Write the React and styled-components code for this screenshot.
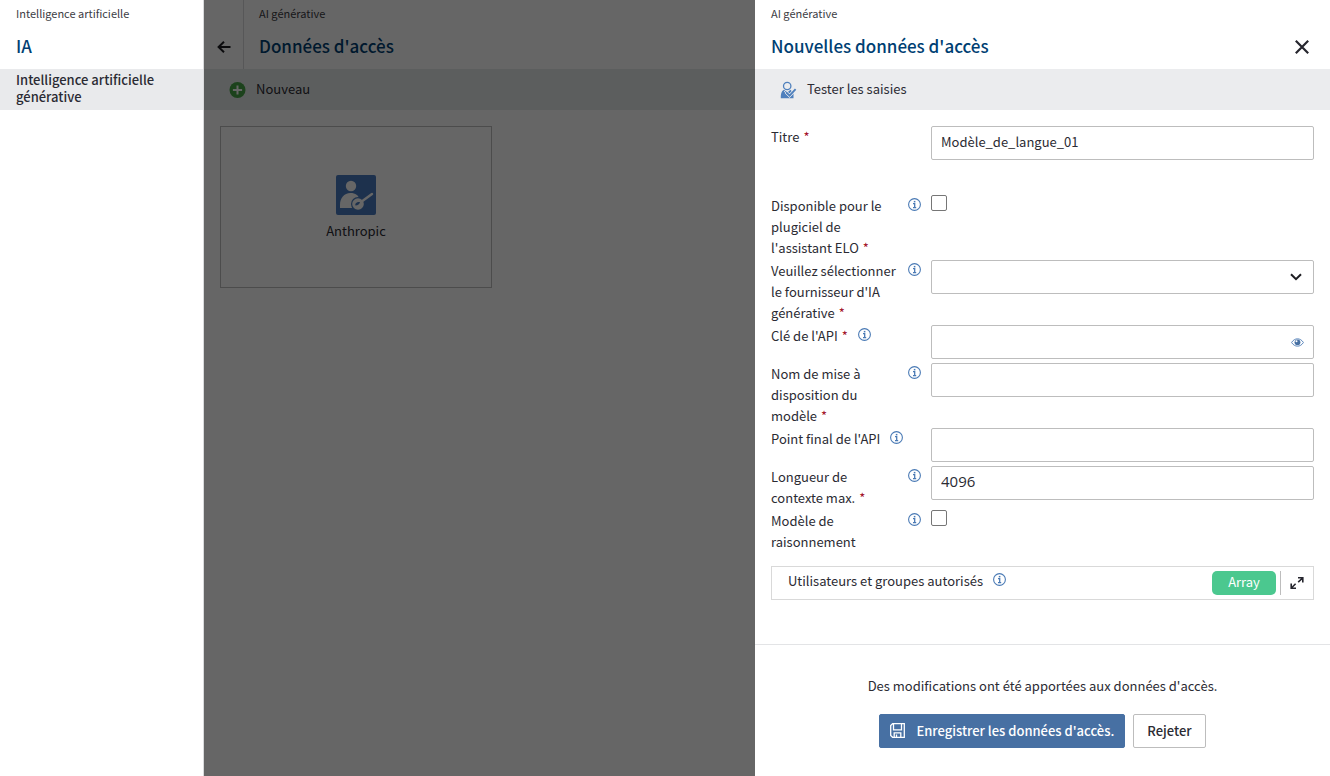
import React, { useState } from "react";
import styled, { createGlobalStyle } from "styled-components";

const GlobalStyle = createGlobalStyle`
  *, *::before, *::after { box-sizing: border-box; }
  body {
    margin: 0;
    background: #fff;
    color: #2b2b33;
    font-family: "Noto Sans CJK SC", "Open Sans", sans-serif;
    font-size: 13px;
    line-height: 21px;
  }
  button, input, select { font: inherit; color: inherit; }
`;

const Page = styled.div`
  display: flex;
  min-height: 100vh;
`;

const Sidebar = styled.nav`
  flex: 0 0 204px;
  border-right: 1px solid #d9dadc;
`;

const Header = styled.header`
  display: flex;
  align-items: stretch;
  height: 69px;
`;

const Titles = styled.div`
  flex: 1;
  padding: 3px 16px 0 ${(p) => (p.$beside ? 15 : 16)}px;
`;

const Crumb = styled.div`
  font-size: 11px;
  line-height: 20px;
  color: #3c3c44;
`;

const Heading = styled.h1`
  margin: 10px 0 0;
  font-size: 17px;
  line-height: 26px;
  font-weight: 500;
  color: #003f73;
`;

const NavLink = styled.a`
  display: block;
  padding: 2px 16px 5px;
  background: #e9eaec;
  color: #2b2b33;
  font-weight: 500;
  line-height: 17px;
  text-decoration: none;
`;

const Main = styled.main`
  flex: 1;
  min-width: 0;
`;

const IconButton = styled.button`
  display: flex;
  align-items: center;
  justify-content: center;
  padding: 0;
  border: 0;
  background: none;
  cursor: pointer;
`;

const BackButton = styled(IconButton)`
  width: 40px;
  padding-top: 25px;
  border-right: 1px solid #d9dadc;
`;

const CloseButton = styled(IconButton)`
  width: 56px;
  padding-top: 25px;
`;

const Toolbar = styled.div`
  display: flex;
  align-items: center;
  height: 41px;
  padding: 0 24px;
  background: ${(p) => p.$tint || "#ebecee"};
`;

const ToolButton = styled.button`
  display: flex;
  align-items: flex-start;
  gap: 10px;
  padding: 0;
  border: 0;
  background: none;
  line-height: 16px;
  cursor: pointer;
`;

const Cards = styled.div`
  display: flex;
  flex-wrap: wrap;
  gap: 16px;
  padding: 16px;
`;

const Card = styled.button`
  display: flex;
  flex-direction: column;
  align-items: center;
  justify-content: center;
  gap: 5px;
  width: 272px;
  height: 162px;
  padding: 2px 0 0;
  border: 1px solid #bdbdbd;
  background: none;
`;

const Backdrop = styled.div`
  position: fixed;
  inset: 0 0 0 204px;
  display: flex;
  justify-content: flex-end;
  background: rgba(0, 0, 0, 0.6);
`;

const Drawer = styled.section`
  display: flex;
  flex-direction: column;
  width: 575px;
  max-width: 100%;
  overflow: auto;
  background: #fff;
`;

const Form = styled.form`
  flex: 1;
  padding: 16px;
`;

const Row = styled.div`
  display: grid;
  grid-template-columns: 150px minmax(0, 1fr);
  column-gap: 10px;
  align-items: start;
  padding-bottom: ${(p) => (p.$spaced ? 31 : 0)}px;
`;

const LabelCell = styled.div`
  display: flex;
  align-items: flex-start;
  gap: 10px;
  padding-bottom: 2px;
`;

const Required = styled.span`
  margin-left: 4px;
  color: #a3122a;
`;

const InfoButton = styled(IconButton)`
  flex: none;
  width: 13px;
  height: 19px;
`;

const Control = styled.div`
  display: flex;
  padding-bottom: ${(p) => (p.$check ? 0 : 4)}px;
`;

const Frame = styled.div`
  display: flex;
  align-items: center;
  flex: 1;
  height: 34px;
  border: 1px solid #bdbdbd;
  border-radius: 2px;
  background: #fff;
`;

const TextInput = styled.input`
  flex: 1;
  min-width: 0;
  height: 32px;
  padding: 0 9px 4px;
  border: 0;
  outline: 0;
  background: none;
`;

const NumberInput = styled(TextInput)`
  font-family: "Open Sans", sans-serif;
  font-size: 15px;
`;

const SelectFrame = styled(Frame)`
  display: grid;
  grid-template-columns: 1fr 34px;
  justify-items: center;

  select {
    grid-area: 1 / 1 / 2 / 3;
    width: 100%;
    height: 32px;
    padding: 0 9px;
    border: 0;
    outline: 0;
    background: none;
    appearance: none;
  }

  svg {
    grid-area: 1 / 2;
    pointer-events: none;
  }
`;

const RevealButton = styled(IconButton)`
  width: 32px;
  height: 32px;
`;

const Checkbox = styled.input`
  appearance: none;
  width: 16px;
  height: 16px;
  margin: 0;
  border: 1px solid #767676;
  border-radius: 2px;
  background: #fff;

  &:checked { background: #4770a3; }
`;

const ArrayBar = styled.div`
  display: flex;
  align-items: center;
  gap: 4px;
  height: 34px;
  margin-top: 12px;
  padding-left: 16px;
  border: 1px solid #d9d9d9;
`;

const ArrayLabel = styled.div`
  display: flex;
  align-items: flex-start;
  flex: 1;
  gap: 10px;
  padding-bottom: 6px;
`;

const Badge = styled.span`
  width: 64px;
  height: 24px;
  border-radius: 5px;
  background: #4bc88f;
  color: #fff;
  line-height: 22px;
  text-align: center;
`;

const ExpandButton = styled(IconButton)`
  width: 33px;
  height: 24px;
  border-left: 1px solid #bdbdbd;
`;

const Footer = styled.footer`
  display: flex;
  flex-direction: column;
  align-items: center;
  gap: 18px;
  padding: 30px 16px 28px;
  border-top: 1px solid #e3e4e6;
`;

const Message = styled.p`
  margin: 0;
`;

const Actions = styled.div`
  display: flex;
  gap: 8px;
`;

const Button = styled.button`
  display: flex;
  align-items: center;
  gap: 11px;
  height: 34px;
  padding: 0 ${(p) => (p.$primary ? 10 : 13)}px 2px;
  border: 1px solid ${(p) => (p.$primary ? "#4770a3" : "#bdbdbd")};
  border-radius: 2px;
  background: ${(p) => (p.$primary ? "#4770a3" : "#fff")};
  color: ${(p) => (p.$primary ? "#fff" : "#2b2b33")};
  font-weight: 500;
`;

const InfoIcon = () => (
  <svg width="13" height="13" viewBox="0 0 13 13" fill="none" stroke="#4a7ab5">
    <circle cx="6.5" cy="6.5" r="5.9" strokeWidth="1.1" />
    <path d="M5 5.7h1.7v3.8M5 9.6h3.2" strokeWidth="1.3" />
    <path d="M5.8 2.9h1.6v1.5H5.800z" fill="#4a7ab5" stroke="none" />
  </svg>
);

const BackIcon = () => (
  <svg width="14" height="12" viewBox="0 0 14 12" fill="none" stroke="#1d1d22" strokeWidth="2">
    <path d="M13.5 6H2M7 .8L1.6 6 7 11.2" />
  </svg>
);

const CloseIcon = () => (
  <svg width="14" height="14" viewBox="0 0 14 14" fill="none" stroke="#26262e" strokeWidth="2.2">
    <path d="M.8.8l12.4 12.4M13.2.8L.8 13.2" />
  </svg>
);

const PlusIcon = () => (
  <svg width="18" height="18" viewBox="0 0 18 18">
    <circle cx="9.5" cy="9" r="8" fill="#46a546" />
    <path d="M9.5 4.4v9.2M4.9 9h9.2" stroke="#fff" strokeWidth="2" />
  </svg>
);

const TestIcon = () => (
  <svg width="18" height="18" viewBox="0 0 18 18" fill="none">
    <circle cx="8.2" cy="5" r="3.7" stroke="#4f80bd" strokeWidth="1.3" />
    <path d="M5 8.800C2.800 9.800 1.800 12 1.800 17.200h12.700V12L11.400 8.800 8.300 11.600z" fill="#4f80bd" />
    <path d="M5.200 10.200l2.200 2.200 1.500-1.300" stroke="#ebecee" strokeWidth="1" />
    <path d="M5.800 11.600l4.800 4.600L17 8.800" stroke="#ebecee" strokeWidth="1" />
    <path d="M7 11.200l3.600 3.400 6-6.400" stroke="#ebecee" strokeWidth="3.200" />
    <path d="M7 11.200l3.600 3.400 6-6.400" stroke="#4f80bd" strokeWidth="1.900" />
  </svg>
);

const AccessIcon = () => (
  <svg width="40" height="40" viewBox="0 0 40 40">
    <rect width="40" height="40" rx="2" fill="#4a7cc0" />
    <circle cx="15" cy="11" r="5.2" fill="#fff" />
    <path d="M4 33v-3c0-7 4-12 10.500-12 5 0 8 2.500 9 6.200L16 28v5z" fill="#fff" />
    <circle cx="22" cy="29" r="7" fill="#4a7cc0" />
    <circle cx="22" cy="29" r="5.800" fill="#fff" />
    <path d="M25 27l11-8" stroke="#fff" strokeWidth="2.400" strokeLinecap="round" />
    <path d="M19.500 30.500c-1-2 1.500-4 4.500-3.500-.5 2-2 3.500-4.500 3.500z" fill="#4a7cc0" />
  </svg>
);

const ChevronIcon = () => (
  <svg width="12" height="8" viewBox="0 0 12 8" fill="none" stroke="#1d1d22" strokeWidth="2">
    <path d="M1 1.200l5 5 5-5" />
  </svg>
);

const EyeIcon = () => (
  <svg width="13" height="9" viewBox="0 0 13 9" fill="none">
    <path d="M.6 4.500C3.500-.4 9.500-.4 12.400 4.500 9.500 9.400 3.500 9.400.6 4.500z" stroke="#5d88bd" strokeWidth="1" />
    <circle cx="6.500" cy="4.300" r="2.900" fill="#4770a3" />
    <circle cx="5.500" cy="3.300" r="1" fill="#fff" />
  </svg>
);

const ExpandIcon = () => (
  <svg width="14" height="12" viewBox="0 0 14 12" fill="none" stroke="#26262e" strokeWidth="1.600">
    <path d="M8 .8h4.800v4.700M12.600 1L8.200 5.200M1.200 6.500v4.700H6M1.400 11l4.200-4.200" />
  </svg>
);

const SaveIcon = () => (
  <svg width="15" height="15" viewBox="0 0 15 15" fill="none" stroke="#fff" strokeWidth="1.300">
    <path d="M2.600.7h11.700v13.600H2.600L.7 12.400V2.600z" />
    <path d="M3.500.7v6.100h8V.7M4.200 14.300V9.800h6.600v4.500M6.500 11.500v2.800" />
  </svg>
);

const Info = () => (
  <InfoButton type="button" aria-label="Information">
    <InfoIcon />
  </InfoButton>
);

function Field({ id, label, required, info = true, spaced, check, children }) {
  return (
    <Row $spaced={spaced}>
      <LabelCell>
        <label htmlFor={id}>
          {label}
          {required && <Required>*</Required>}
        </label>
        {info && <Info />}
      </LabelCell>
      <Control $check={check}>{children}</Control>
    </Row>
  );
}

export default function App() {
  const [reveal, setReveal] = useState(false);
  return (
    <Page>
      <GlobalStyle />
      <Sidebar>
        <Header>
          <Titles>
            <Crumb>Intelligence artificielle</Crumb>
            <Heading>IA</Heading>
          </Titles>
        </Header>
        <NavLink href="#generative">Intelligence artificielle générative</NavLink>
      </Sidebar>

      <Main>
        <Header>
          <BackButton aria-label="Retour"><BackIcon /></BackButton>
          <Titles $beside>
            <Crumb>AI générative</Crumb>
            <Heading>Données d'accès</Heading>
          </Titles>
        </Header>
        <Toolbar $tint="#e7eceb">
          <ToolButton><PlusIcon />Nouveau</ToolButton>
        </Toolbar>
        <Cards>
          <Card><AccessIcon />Anthropic</Card>
        </Cards>
      </Main>

      <Backdrop>
        <Drawer role="dialog" aria-label="Nouvelles données d'accès">
          <Header>
            <Titles>
              <Crumb>AI générative</Crumb>
              <Heading as="h2">Nouvelles données d'accès</Heading>
            </Titles>
            <CloseButton aria-label="Fermer"><CloseIcon /></CloseButton>
          </Header>
          <Toolbar>
            <ToolButton><TestIcon />Tester les saisies</ToolButton>
          </Toolbar>
          <Form>
            <Field id="title" label="Titre" required info={false} spaced>
              <Frame><TextInput id="title" defaultValue="Modèle_de_langue_01" /></Frame>
            </Field>
            <Field id="plugin" label="Disponible pour le plugiciel de l'assistant ELO" required check>
              <Checkbox id="plugin" type="checkbox" />
            </Field>
            <Field id="provider" label="Veuillez sélectionner le fournisseur d'IA générative" required>
              <SelectFrame>
                <select id="provider"><option></option></select>
                <ChevronIcon />
              </SelectFrame>
            </Field>
            <Field id="key" label="Clé de l'API" required>
              <Frame>
                <TextInput id="key" type={reveal ? "text" : "password"} />
                <RevealButton type="button" aria-label="Afficher" onClick={() => setReveal(!reveal)}>
                  <EyeIcon />
                </RevealButton>
              </Frame>
            </Field>
            <Field id="deployment" label="Nom de mise à disposition du modèle" required>
              <Frame><TextInput id="deployment" /></Frame>
            </Field>
            <Field id="endpoint" label="Point final de l'API">
              <Frame><TextInput id="endpoint" /></Frame>
            </Field>
            <Field id="context" label="Longueur de contexte max." required>
              <Frame><NumberInput id="context" inputMode="numeric" defaultValue="4096" /></Frame>
            </Field>
            <Field id="reasoning" label="Modèle de raisonnement" check>
              <Checkbox id="reasoning" type="checkbox" />
            </Field>
            <ArrayBar>
              <ArrayLabel>Utilisateurs et groupes autorisés<Info /></ArrayLabel>
              <Badge>Array</Badge>
              <ExpandButton type="button" aria-label="Agrandir"><ExpandIcon /></ExpandButton>
            </ArrayBar>
          </Form>
          <Footer>
            <Message>Des modifications ont été apportées aux données d'accès.</Message>
            <Actions>
              <Button $primary><SaveIcon />Enregistrer les données d'accès.</Button>
              <Button>Rejeter</Button>
            </Actions>
          </Footer>
        </Drawer>
      </Backdrop>
    </Page>
  );
}
